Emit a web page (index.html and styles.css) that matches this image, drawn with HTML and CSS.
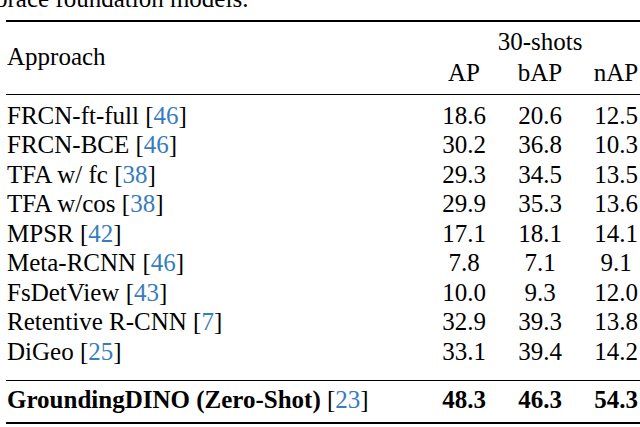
FILE: index.html
```html
<!DOCTYPE html>
<html lang="en">
<head>
    <meta charset="UTF-8">
    <meta name="viewport" content="width=device-width, initial-scale=1.0">
    <title>Few-shot results</title>
    <link rel="stylesheet" href="styles.css">
</head>
<body>
    <p class="caption">brace foundation models.</p>

    <div class="results">
        <div class="results-head">
            <div class="approach">Approach</div>
            <div class="shots">30-shots</div>
            <div class="num">AP</div>
            <div class="num">bAP</div>
            <div class="num">nAP</div>
        </div>

        <div class="results-body">
            <div class="name">FRCN-ft-full [<a href="#">46</a>]</div>
            <div class="num">18.6</div><div class="num">20.6</div><div class="num">12.5</div>

            <div class="name">FRCN-BCE [<a href="#">46</a>]</div>
            <div class="num">30.2</div><div class="num">36.8</div><div class="num">10.3</div>

            <div class="name">TFA w/ fc [<a href="#">38</a>]</div>
            <div class="num">29.3</div><div class="num">34.5</div><div class="num">13.5</div>

            <div class="name">TFA w/cos [<a href="#">38</a>]</div>
            <div class="num">29.9</div><div class="num">35.3</div><div class="num">13.6</div>

            <div class="name">MPSR [<a href="#">42</a>]</div>
            <div class="num">17.1</div><div class="num">18.1</div><div class="num">14.1</div>

            <div class="name">Meta-RCNN [<a href="#">46</a>]</div>
            <div class="num">7.8</div><div class="num">7.1</div><div class="num">9.1</div>

            <div class="name">FsDetView [<a href="#">43</a>]</div>
            <div class="num">10.0</div><div class="num">9.3</div><div class="num">12.0</div>

            <div class="name">Retentive R-CNN [<a href="#">7</a>]</div>
            <div class="num">32.9</div><div class="num">39.3</div><div class="num">13.8</div>

            <div class="name">DiGeo [<a href="#">25</a>]</div>
            <div class="num">33.1</div><div class="num">39.4</div><div class="num">14.2</div>
        </div>

        <div class="results-foot">
            <div class="name"><b>GroundingDINO (Zero-Shot)</b> [<a href="#">23</a>]</div>
            <div class="num"><b>48.3</b></div><div class="num"><b>46.3</b></div><div class="num"><b>54.3</b></div>
        </div>
    </div>
</body>
</html>
```

FILE: styles.css
```css
html, body {
    overflow: hidden;
}

body {
    margin: 0;
    background-color: #fff;
    color: #000;
    font-family: "Liberation Serif", "Times New Roman", serif;
    font-size: 25px;
}

.caption {
    margin: -16px 0 0 -5px;
    line-height: 30px;
    white-space: nowrap;
}

.results {
    width: 648px;
    margin: 6px 0 0 6px;
    border-top: 2px solid #000;
    border-bottom: 2px solid #000;
}

.results-head,
.results-body,
.results-foot {
    display: grid;
    grid-template-columns: 420px 76px 76px 76px;
}

.results-head {
    grid-template-rows: 31px 31px;
    line-height: 31px;
    padding: 3.5px 0 6.5px;
    border-bottom: 1px solid #000;
}

.results-body {
    grid-auto-rows: 29.5px;
    line-height: 29.5px;
    padding: 5.6px 0 13.9px;
    border-bottom: 1px solid #000;
}

.results-foot {
    grid-auto-rows: 29.5px;
    line-height: 29.5px;
    padding: 3.8px 0 7.7px;
}

.approach {
    grid-row: 1 / span 2;
    align-self: center;
    padding-left: 1px;
}

.shots {
    grid-column: 2 / span 3;
    text-align: center;
}

.results-head .num {
    grid-row: 2;
}

.name {
    padding-left: 1px;
    white-space: nowrap;
}

.num {
    text-align: center;
    white-space: nowrap;
}

a {
    color: #367dbd;
    text-decoration: none;
}
```
